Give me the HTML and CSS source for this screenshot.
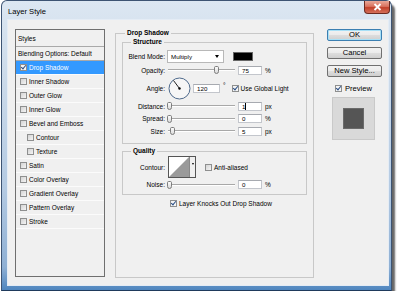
FILE: index.html
```html
<!DOCTYPE html>
<html lang="en">
<head>
    <meta charset="UTF-8">
    <title>Layer Style</title>
    <link rel="stylesheet" href="styles.css">
</head>
<body>
    <div class="window">
        <div class="titlebar">
            <span class="title">Layer Style</span>
            <span class="close">
                <svg width="9" height="8" viewBox="0 0 9 8"><path d="M1.5 1 L7.5 7 M7.5 1 L1.5 7" stroke="#fff" stroke-width="1.8"/></svg>
            </span>
        </div>
        <div class="client">
            <!-- 左边的样式列表 -->
            <ul class="styles-list">
                <li class="head">Styles</li>
                <li class="head">Blending Options: Default</li>
                <li class="on"><i class="cb checked"></i>Drop Shadow</li>
                <li><i class="cb"></i>Inner Shadow</li>
                <li><i class="cb"></i>Outer Glow</li>
                <li><i class="cb"></i>Inner Glow</li>
                <li><i class="cb"></i>Bevel and Emboss</li>
                <li class="sub"><i class="cb"></i>Contour</li>
                <li class="sub"><i class="cb"></i>Texture</li>
                <li><i class="cb"></i>Satin</li>
                <li><i class="cb"></i>Color Overlay</li>
                <li><i class="cb"></i>Gradient Overlay</li>
                <li><i class="cb"></i>Pattern Overlay</li>
                <li><i class="cb"></i>Stroke</li>
            </ul>

            <!-- 中间的参数面板 -->
            <fieldset class="group">
                <legend>Drop Shadow</legend>
                <fieldset class="box structure">
                    <legend>Structure</legend>
                    <div class="row r-blend">
                        <label>Blend Mode:</label>
                        <div class="select">Multiply<span class="arrow"></span></div>
                        <span class="swatch"></span>
                    </div>
                    <div class="row r-opacity">
                        <label>Opacity:</label>
                        <div class="slider"><span class="thumb" style="left: 47px"></span></div>
                        <span class="field">75</span>
                        <span class="unit">%</span>
                    </div>
                    <div class="row r-angle">
                        <label>Angle:</label>
                        <svg class="dial" width="23" height="23" viewBox="0 0 23 23">
                            <circle cx="11.5" cy="11.5" r="10.5" fill="#f6f6f6" stroke="#4f6a8c" stroke-width="1"/>
                            <path d="M11.5 11.5 L5.5 3.5" stroke="#222" stroke-width="1"/>
                            <circle cx="11.5" cy="11.5" r="1.2" fill="#000"/>
                        </svg>
                        <span class="field wide">120</span>
                        <span class="unit deg">°</span>
                        <i class="cb checked"></i>
                        <span class="cb-text">Use Global Light</span>
                    </div>
                    <div class="row r-distance">
                        <label>Distance:</label>
                        <div class="slider"><span class="thumb" style="left: 0px"></span></div>
                        <span class="field">1<i class="caret"></i></span>
                        <span class="unit">px</span>
                    </div>
                    <div class="row r-spread">
                        <label>Spread:</label>
                        <div class="slider"><span class="thumb" style="left: 0px"></span></div>
                        <span class="field">0</span>
                        <span class="unit">%</span>
                    </div>
                    <div class="row r-size">
                        <label>Size:</label>
                        <div class="slider"><span class="thumb" style="left: 3px"></span></div>
                        <span class="field">5</span>
                        <span class="unit">px</span>
                    </div>
                </fieldset>

                <fieldset class="box quality">
                    <legend>Quality</legend>
                    <div class="row r-contour">
                        <label>Contour:</label>
                        <div class="contour">
                            <svg width="20" height="20" viewBox="0 0 20 20">
                                <rect width="20" height="20" fill="#fff"/>
                                <path d="M0 20 L20 0 L20 20 Z" fill="#9a9a9a"/>
                            </svg>
                            <span class="drop"><span class="arrow"></span></span>
                        </div>
                        <i class="cb"></i>
                        <span class="cb-text">Anti-aliased</span>
                    </div>
                    <div class="row r-noise">
                        <label>Noise:</label>
                        <div class="slider"><span class="thumb" style="left: 0px"></span></div>
                        <span class="field">0</span>
                        <span class="unit">%</span>
                    </div>
                </fieldset>

                <div class="knock">
                    <i class="cb checked"></i>
                    <span class="cb-text">Layer Knocks Out Drop Shadow</span>
                </div>
            </fieldset>

            <!-- 右边的按钮 -->
            <div class="side">
                <button class="btn default">OK</button>
                <button class="btn">Cancel</button>
                <button class="btn">New Style...</button>
                <div class="preview-check">
                    <i class="cb checked"></i>
                    <span>Preview</span>
                </div>
                <div class="preview">
                    <div class="preview-square"></div>
                </div>
            </div>
        </div>
    </div>
</body>
</html>
```

FILE: styles.css
```css
body {
    margin: 0;
    background-color: #fff;
    font-family: "Liberation Sans", Arial, sans-serif;
    font-size: 6.5px;
    color: #000;
}

/* 窗口外框 */
.window {
    width: 391px;
    height: 291px;
    margin-left: 1px;
    box-sizing: border-box;
    padding: 0 3px 5px 6px;
    border: 1px solid #3d5473;
    border-bottom-color: #1f3a5c;
    border-radius: 6px 6px 0 0;
    background: linear-gradient(180deg, #dce7f2 0%, #cddbea 25%, #b4cae2 65%, #8fb0d4 92%, #4f86bf 100%);
    box-shadow: 3px 4px 2px rgba(0, 0, 0, 0.6);
    display: flex;
    flex-direction: column;
}
.titlebar {
    height: 19px;
    display: flex;
    justify-content: space-between;
    align-items: flex-start;
}
.title {
    padding-top: 6px;
    font-size: 7.6px;
    color: #000;
}
.close {
    width: 26px;
    height: 13px;
    margin-right: -2px;
    box-sizing: border-box;
    border: 1px solid #6c2b21;
    border-top: 0;
    border-radius: 0 0 4px 4px;
    background: linear-gradient(180deg, #e9a898 0%, #d9735f 45%, #c2412a 55%, #d4705a 100%);
    display: flex;
    justify-content: center;
    align-items: center;
}
.client {
    flex: 1;
    background-color: #f0f0f0;
    box-shadow: 0 0 0 1px #e4ecf5;
    display: flex;
    align-items: flex-start;
}

/* 样式列表 */
.styles-list {
    list-style: none;
    margin: 9px 0 0 7px;
    padding: 0;
    width: 90px;
    height: 248px;
    box-sizing: border-box;
    border: 1px solid #6f6f6f;
    background-color: #f0f0f0;
}
.styles-list li {
    height: 14px;
    box-sizing: border-box;
    border-bottom: 1px solid #fbfbfb;
    padding-left: 4px;
    display: flex;
    align-items: center;
    white-space: nowrap;
}
.styles-list li.head {
    padding-left: 2px;
    border-bottom: 1px solid #a9a9a9;
}
.styles-list li.head:first-child {
    height: 17px;
}
.styles-list li.sub {
    padding-left: 11px;
}
.styles-list li.on {
    background-color: #3399ff;
    color: #fff;
}
.styles-list .cb {
    margin-right: 2px;
}

/* 复选框 */
.cb {
    display: inline-block;
    width: 7px;
    height: 7px;
    box-sizing: border-box;
    border: 1px solid #8e8f8f;
    background: linear-gradient(135deg, #d4d4d4 0%, #f4f4f4 100%);
    position: relative;
    flex-shrink: 0;
}
.cb.checked {
    background: #f4f4f4;
}
.cb.checked::after {
    content: '';
    position: absolute;
    left: 1px;
    top: -1px;
    width: 2px;
    height: 4px;
    border-right: 1px solid #2b4f86;
    border-bottom: 1px solid #2b4f86;
    transform: rotate(40deg);
}
.cb-text {
    margin-left: 2px;
    white-space: nowrap;
}

/* 参数组 */
fieldset {
    margin: 0;
    padding: 0;
    min-width: 0;
    border: 1px solid #c8c8c8;
}
legend {
    margin-left: 9px;
    padding: 0 2px;
    line-height: 8px;
    font-weight: bold;
}
.group {
    margin: 9px 0 0 10px;
    width: 199px;
    height: 249px;
    box-sizing: border-box;
}
.box {
    margin: 1px 0 0 6px;
    width: 185px;
    box-sizing: border-box;
}
.box legend {
    margin-left: 8px;
}
.structure {
    padding: 4px 0 6px;
}
.quality {
    margin-top: 3px;
    padding: 1px 0 3px;
}
.row {
    display: flex;
    align-items: center;
}
.row label {
    width: 42px;
    margin-right: 2px;
    text-align: right;
    white-space: nowrap;
}
.r-blend { height: 13px; }
.r-opacity { height: 14px; }
.r-angle { height: 23px; }
.r-distance { height: 12px; }
.r-spread { height: 13px; }
.r-size { height: 12px; }
.r-contour { height: 22px; }
.r-noise { height: 13px; }

.select {
    width: 57px;
    height: 13px;
    box-sizing: border-box;
    border: 1px solid #b8b8b8;
    background-color: #fff;
    padding-left: 3px;
    display: flex;
    align-items: center;
    justify-content: space-between;
    font-size: 6.2px;
}
.arrow {
    width: 0;
    height: 0;
    margin-right: 4px;
    border-left: 2.5px solid transparent;
    border-right: 2.5px solid transparent;
    border-top: 3px solid #000;
}
.swatch {
    width: 20px;
    height: 9px;
    margin-left: 9px;
    box-sizing: border-box;
    border: 1px solid #666;
    background-color: #000;
}
.slider {
    width: 70px;
    height: 10px;
    position: relative;
}
.slider::before {
    content: '';
    position: absolute;
    left: 1px;
    right: 2px;
    top: 4px;
    border-top: 1px solid #a8a8a8;
    border-bottom: 1px solid #fff;
}
.thumb {
    position: absolute;
    top: 1px;
    width: 5px;
    height: 8px;
    box-sizing: border-box;
    border: 1px solid #7d7d7d;
    border-radius: 2px 2px 3px 3px;
    background: linear-gradient(180deg, #fdfdfd, #d8d8d8);
}
.field {
    width: 24px;
    height: 9px;
    margin-left: 1px;
    box-sizing: border-box;
    border: 1px solid #c3c6cc;
    border-top-color: #a7aab0;
    background-color: #fff;
    padding-left: 3px;
    font-size: 6.2px;
    line-height: 7px;
    display: flex;
    align-items: center;
}
.field.wide {
    width: 27px;
    margin-left: 2px;
}
.caret {
    width: 1px;
    height: 7px;
    background-color: #000;
}
.unit {
    margin-left: 3px;
}
.unit.deg {
    align-self: flex-start;
    margin-top: 5px;
    margin-right: 6px;
}
.dial {
    margin-left: 1px;
}
.contour {
    margin-left: 1px;
    display: flex;
    border: 1px solid #555;
    height: 22px;
    box-sizing: border-box;
    background-color: #fff;
}
.contour svg {
    display: block;
}
.contour .drop {
    width: 5px;
    border-left: 1px solid #888;
    background-color: #f0f0f0;
    display: flex;
    justify-content: center;
    padding-top: 6px;
}
.contour .arrow {
    margin: 0;
    border-left-width: 1.5px;
    border-right-width: 1.5px;
    border-top-width: 2px;
}
.r-contour .cb {
    margin-left: 9px;
}
.knock {
    margin: 2px 0 0 54px;
    display: flex;
    align-items: center;
    height: 12px;
}

/* 右侧按钮 */
.side {
    margin: 9px 0 0 13px;
    width: 55px;
    display: flex;
    flex-direction: column;
    font-size: 7.6px;
}
.btn {
    height: 12px;
    margin: 0 0 6px;
    padding: 0;
    box-sizing: border-box;
    border: 1px solid #707070;
    border-radius: 2px;
    background: linear-gradient(180deg, #f2f2f2 0%, #ebebeb 48%, #dddddd 52%, #cfcfcf 100%);
    font-family: inherit;
    font-size: 7.6px;
    line-height: 10px;
    color: #000;
}
.btn.default {
    border-color: #3c7fb1;
    box-shadow: inset 0 0 0 1px #a8e0f6;
}
.preview-check {
    margin: 0 0 0 8px;
    display: flex;
    align-items: center;
    height: 10px;
}
.preview-check span {
    margin-left: 3px;
}
.preview {
    margin: 4px 0 0 5px;
    width: 43px;
    height: 43px;
    box-sizing: border-box;
    border: 1px solid #c9c9c9;
    background-color: #d9d9d9;
    display: flex;
    justify-content: center;
    align-items: center;
}
.preview-square {
    width: 21px;
    height: 21px;
    box-sizing: border-box;
    border: 1px solid #6a6a6a;
    background-color: #555;
}
```
